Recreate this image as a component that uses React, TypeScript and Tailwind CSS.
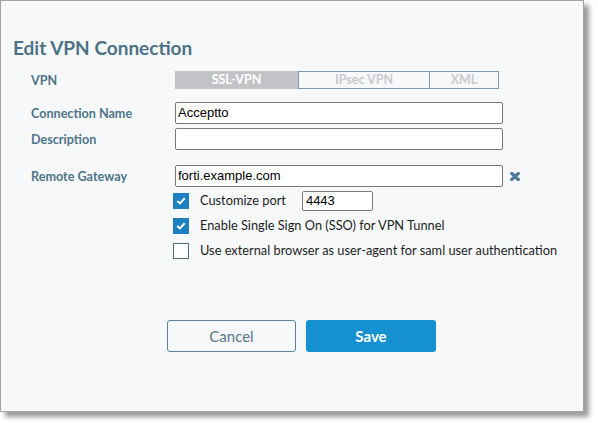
import { ReactNode } from 'react'

const lato = { fontFamily: 'Lato, "Open Sans", sans-serif' }
const arial = { fontFamily: '"Liberation Sans", Arial, sans-serif' }

function Label({ children }: { children: ReactNode }) {
  return (
    <div className="w-[144px] shrink-0 pt-[3px] text-[12.6px] font-bold text-[#4e7588] leading-none">
      {children}
    </div>
  )
}

function TextInput({ value, className = 'w-[328px]' }: { value?: string; className?: string }) {
  return (
    <div
      className={`${className} h-[22px] border border-[#7a7a7a] rounded-[2px] bg-white px-[2px] flex items-center text-[13px] text-black`}
      style={arial}
    >
      {value}
    </div>
  )
}

function Checkbox({ checked }: { checked: boolean }) {
  return checked ? (
    <div className="w-[16px] h-[16px] bg-[#1d80c2] flex items-center justify-center shrink-0">
      <svg width="10" height="8" viewBox="0 0 10 8">
        <path d="M1.3 4 L3.9 6.4 L8.7 1.3" stroke="white" strokeWidth="2" fill="none" />
      </svg>
    </div>
  ) : (
    <div className="w-[16px] h-[16px] border border-[#4f6d7a] bg-white shrink-0" />
  )
}

export default function App() {
  return (
    <div className="w-[598px] h-[426px] bg-white" style={lato}>
      <div className="w-[584px] h-[412px] border border-[#a3a3a3] bg-[#f7f8fa] shadow-[5px_5px_5px_rgba(0,0,0,0.4)] flex flex-col">
        <h1 className="mt-[36px] ml-[12px] text-[19px] leading-[22px] font-bold text-[#4d7386]">
          Edit VPN Connection
        </h1>

        <div className="ml-[30px] flex flex-col">
          <div className="mt-[12px] flex items-center h-[18px]">
            <Label>VPN</Label>
            <div className="flex h-[18px] text-[12.5px] font-bold leading-none">
              <div className="w-[123px] bg-[#c3c3c7] text-white flex items-center justify-center">
                SSL-VPN
              </div>
              <div className="w-[132px] border border-[#7d98ad] text-[#c9c9cd] flex items-center justify-center">
                IPsec VPN
              </div>
              <div className="w-[69px] border border-l-0 border-[#7d98ad] text-[#c9c9cd] flex items-center justify-center">
                <span className="border-l border-[#7d98ad] h-[18px] -ml-[1px] mr-auto" />
                <span className="mr-auto">XML</span>
              </div>
            </div>
          </div>

          <div className="mt-[13px] flex items-center">
            <Label>Connection Name</Label>
            <TextInput value="Acceptto" />
          </div>

          <div className="mt-[4px] flex items-center">
            <Label>Description</Label>
            <TextInput />
          </div>

          <div className="mt-[15px] flex items-center">
            <Label>Remote Gateway</Label>
            <TextInput value="forti.example.com" />
            <svg className="ml-[7px]" width="10" height="9" viewBox="0 0 10 9">
              <path d="M1.8 1.5 L8.2 7.5 M8.2 1.5 L1.8 7.5" stroke="#4a7896" strokeWidth="3.2" strokeLinecap="square" />
            </svg>
          </div>

          <div className="mt-[1px] ml-[142px] flex flex-col text-[12.8px] text-[#1e1e1e]">
            <div className="h-[25px] flex items-center">
              <Checkbox checked />
              <span className="ml-[11px]">Customize port</span>
              <div
                className="ml-[16px] w-[71px] h-[20px] border border-[#7a7a7a] rounded-[2px] bg-white px-[3px] flex items-center text-[13px] text-black"
                style={arial}
              >
                4443
              </div>
            </div>
            <div className="h-[25px] flex items-center">
              <Checkbox checked />
              <span className="ml-[11px]">Enable Single Sign On (SSO) for VPN Tunnel</span>
            </div>
            <div className="h-[25px] flex items-center">
              <Checkbox checked={false} />
              <span className="ml-[11px]">Use external browser as user-agent for saml user authentication</span>
            </div>
          </div>
        </div>

        <div className="mt-[57px] ml-[166px] flex gap-[10px]">
          <button className="w-[129px] h-[32px] border border-[#5b8396] rounded-[3px] bg-[#f7f8fa] text-[15px] text-[#5a7684]">
            Cancel
          </button>
          <button className="w-[130px] h-[32px] rounded-[3px] bg-[#1591d1] text-[15px] font-bold text-white">
            Save
          </button>
        </div>
      </div>
    </div>
  )
}
